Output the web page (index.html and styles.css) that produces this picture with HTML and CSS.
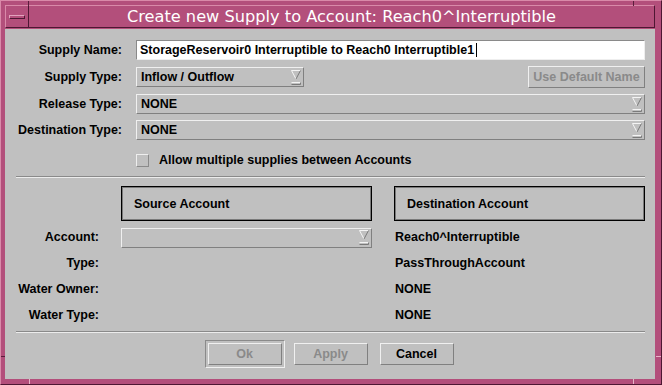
FILE: index.html
```html
<!DOCTYPE html>
<html lang="en">
<head>
    <meta charset="UTF-8">
    <title>Create new Supply to Account</title>
    <link rel="stylesheet" href="styles.css">
</head>
<body>
<div class="window">
    <!-- frame resize ticks -->
    <span class="tick tick-tl-v"></span>
    <span class="tick tick-tr-v"></span>
    <span class="tick tick-bl-v"></span>
    <span class="tick tick-br-v"></span>
    <span class="tick tick-l-h"></span>
    <span class="tick tick-r-h"></span>

    <div class="titlebar">
        <div class="menu-btn"><span class="menu-bar"></span></div>
        <div class="title">Create new Supply to Account: Reach0^Interruptible</div>
    </div>

    <div class="dialog">
        <!-- Supply Section -->
        <div class="form">
            <div class="lbl">Supply Name:</div>
            <div class="text-field">StorageReservoir0 Interruptible to Reach0 Interruptible1<span class="caret"></span></div>

            <div class="lbl">Supply Type:</div>
            <div class="split">
                <div class="option short">
                    <span>Inflow / Outflow</span>
                    <svg class="arrow" width="11" height="16" viewBox="0 0 11 16">
                        <polygon points="0.5,0.5 9.5,0.5 5,9" fill="#c0c0c0"/>
                        <path d="M0.5 0.5 H9.5 M0.5 0.5 L5 9" stroke="#f4f4f4" fill="none"/>
                        <path d="M9.5 0.5 L5 9" stroke="#7a7a7a" fill="none"/>
                        <path d="M0.5 12.5 H9.5" stroke="#f4f4f4"/>
                        <path d="M0.5 14.5 H9.5 M9.5 12.5 V14.5" stroke="#7a7a7a"/>
                    </svg>
                </div>
                <button class="btn disabled">Use Default Name</button>
            </div>

            <div class="lbl">Release Type:</div>
            <div class="option">
                <span>NONE</span>
                <svg class="arrow" width="11" height="16" viewBox="0 0 11 16">
                    <polygon points="0.5,0.5 9.5,0.5 5,9" fill="#c0c0c0"/>
                    <path d="M0.5 0.5 H9.5 M0.5 0.5 L5 9" stroke="#f4f4f4" fill="none"/>
                    <path d="M9.5 0.5 L5 9" stroke="#7a7a7a" fill="none"/>
                    <path d="M0.5 12.5 H9.5" stroke="#f4f4f4"/>
                    <path d="M0.5 14.5 H9.5 M9.5 12.5 V14.5" stroke="#7a7a7a"/>
                </svg>
            </div>

            <div class="lbl">Destination Type:</div>
            <div class="option">
                <span>NONE</span>
                <svg class="arrow" width="11" height="16" viewBox="0 0 11 16">
                    <polygon points="0.5,0.5 9.5,0.5 5,9" fill="#c0c0c0"/>
                    <path d="M0.5 0.5 H9.5 M0.5 0.5 L5 9" stroke="#f4f4f4" fill="none"/>
                    <path d="M9.5 0.5 L5 9" stroke="#7a7a7a" fill="none"/>
                    <path d="M0.5 12.5 H9.5" stroke="#f4f4f4"/>
                    <path d="M0.5 14.5 H9.5 M9.5 12.5 V14.5" stroke="#7a7a7a"/>
                </svg>
            </div>

            <div></div>
            <div class="check-row">
                <span class="checkbox"></span>
                <span>Allow multiple supplies between Accounts</span>
            </div>
        </div>

        <div class="sep"></div>

        <!-- Accounts Section -->
        <div class="accounts">
            <div></div>
            <div class="acct-head">Source Account</div>
            <div class="acct-head">Destination Account</div>

            <div class="lbl">Account:</div>
            <div class="option">
                <span></span>
                <svg class="arrow" width="11" height="16" viewBox="0 0 11 16">
                    <polygon points="0.5,0.5 9.5,0.5 5,9" fill="#c0c0c0"/>
                    <path d="M0.5 0.5 H9.5 M0.5 0.5 L5 9" stroke="#f4f4f4" fill="none"/>
                    <path d="M9.5 0.5 L5 9" stroke="#7a7a7a" fill="none"/>
                    <path d="M0.5 12.5 H9.5" stroke="#f4f4f4"/>
                    <path d="M0.5 14.5 H9.5 M9.5 12.5 V14.5" stroke="#7a7a7a"/>
                </svg>
            </div>
            <div class="value">Reach0^Interruptible</div>

            <div class="lbl">Type:</div>
            <div></div>
            <div class="value">PassThroughAccount</div>

            <div class="lbl">Water Owner:</div>
            <div></div>
            <div class="value">NONE</div>

            <div class="lbl">Water Type:</div>
            <div></div>
            <div class="value">NONE</div>
        </div>

        <div class="sep"></div>

        <!-- Button Row -->
        <div class="buttons">
            <div class="default-ring"><button class="btn action disabled">Ok</button></div>
            <button class="btn action disabled">Apply</button>
            <button class="btn action">Cancel</button>
        </div>
    </div>
</div>
</body>
</html>
```

FILE: styles.css
```css
body {
    margin: 0;
    font-family: "Liberation Sans", Arial, sans-serif;
    font-size: 12.5px;
    font-weight: bold;
    color: #000;
}

.window {
    position: relative;
    width: 662px;
    height: 385px;
    box-sizing: border-box;
    background: #b34f7b;
    border: 1px solid;
    border-color: #d98aa9 #4e1733 #4e1733 #d98aa9;
    padding: 4px 6px 5px 4px;
    display: flex;
    flex-direction: column;
}

.tick {
    position: absolute;
    background: #5a1e3c;
}

.tick-tl-v { left: 27px; top: 0; width: 1px; height: 5px; }
.tick-tr-v { left: 632px; top: 0; width: 1px; height: 5px; }
.tick-bl-v { left: 28px; bottom: 0; width: 1px; height: 5px; background: #e8b4c8; }
.tick-br-v { left: 632px; bottom: 0; width: 1px; height: 5px; background: #e8b4c8; }
.tick-l-h { left: 0; top: 355px; width: 4px; height: 1px; }
.tick-r-h { right: 0; top: 355px; width: 5px; height: 1px; background: #e8b4c8; }

/* Title bar */
.titlebar {
    display: flex;
    height: 23px;
    box-sizing: border-box;
    border: 1px solid;
    border-color: #d98aa9 #4e1733 #4e1733 #d98aa9;
    background: #b34f7b;
}

.menu-btn {
    width: 22px;
    border-right: 1px solid #4e1733;
    display: flex;
    align-items: center;
    justify-content: center;
}

.menu-bar {
    width: 14px;
    height: 2px;
    border: 1px solid;
    border-color: #e2a3bd #4e1733 #4e1733 #e2a3bd;
}

.title {
    flex: 1;
    text-align: center;
    color: #fff;
    font-family: "DejaVu Sans", sans-serif;
    font-weight: normal;
    font-size: 16.2px;
    line-height: 21px;
}

/* Dialog body */
.dialog {
    flex: 1;
    background: #c0c0c0;
    margin-top: 1px;
    padding: 11px 10px 0 11px;
}

.form {
    display: grid;
    grid-template-columns: 106px 1fr;
    column-gap: 14px;
    row-gap: 6px;
    align-items: center;
}

.lbl {
    text-align: right;
    white-space: nowrap;
}

.text-field {
    height: 20px;
    box-sizing: border-box;
    background: #fff;
    border: 1px solid;
    border-color: #8a8a8a #eeeeee #eeeeee #8a8a8a;
    padding-left: 3px;
    line-height: 18px;
    display: flex;
    align-items: center;
}

.caret {
    display: inline-block;
    width: 1px;
    height: 14px;
    background: #000;
    margin-left: 2px;
}

.split {
    display: flex;
    justify-content: space-between;
    align-items: center;
}

.option {
    height: 20px;
    box-sizing: border-box;
    border: 1px solid;
    border-color: #f0f0f0 #808080 #808080 #f0f0f0;
    padding: 0 1px 0 4px;
    display: flex;
    justify-content: space-between;
    align-items: center;
}

.option.short {
    width: 168px;
}

.arrow {
    display: block;
    margin-top: 1px;
}

.btn {
    font-family: inherit;
    font-size: 12.5px;
    font-weight: bold;
    color: #000;
    background: #c0c0c0;
    border: 1px solid;
    border-color: #f0f0f0 #808080 #808080 #f0f0f0;
    padding: 0;
    height: 22px;
    margin: 0;
}

.btn.disabled {
    color: #8a8a8a;
}

.split .btn {
    width: 117px;
}

.check-row {
    display: flex;
    align-items: center;
    gap: 10px;
    height: 20px;
    margin-top: 4px;
}

.checkbox {
    width: 13px;
    height: 13px;
    box-sizing: border-box;
    border: 1px solid;
    border-color: #eeeeee #8a8a8a #8a8a8a #eeeeee;
}

.sep {
    height: 1px;
    background: #8a8a8a;
    border-bottom: 1px solid #ececec;
    margin-top: 6px;
}

.accounts {
    display: grid;
    grid-template-columns: 83px 251px 1fr;
    column-gap: 22px;
    grid-template-rows: 35px 20px 20px 20px 20px;
    row-gap: 6px;
    align-items: center;
    margin-top: 8px;
}

.accounts .option {
    margin-top: 1px;
}

.acct-head {
    height: 35px;
    box-sizing: border-box;
    border: 1px solid #000;
    box-shadow: inset 0 0 0 1px #7a7a7a;
    padding-left: 12px;
    display: flex;
    align-items: center;
}

.value {
    padding-left: 1px;
}

.buttons {
    display: flex;
    justify-content: center;
    align-items: center;
    gap: 12px;
    margin-top: 7px;
}

.default-ring {
    border: 1px solid;
    border-color: #8a8a8a #f0f0f0 #f0f0f0 #8a8a8a;
    padding: 2px;
    margin: 0 -3px;
}

.btn.action {
    width: 74px;
    display: block;
}
```
